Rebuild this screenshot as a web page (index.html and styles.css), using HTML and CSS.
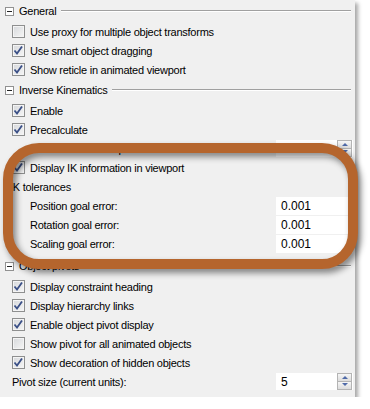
FILE: index.html
```html
<!DOCTYPE html>
<html>
<head>
<meta charset="utf-8">
<link rel="stylesheet" href="styles.css">
</head>
<body>
<div class="panel">

<div class="group">
  <div class="head"><span class="toggle"></span><span class="title">General</span><span class="rule"></span></div>
  <div class="row"><span class="cb"></span>Use proxy for multiple object transforms</div>
  <div class="row"><span class="cb on"><svg width="11" height="11" viewBox="0 0 11 11"><path d="M1.5 5.5 L4 8.5 L9 1.5" /></svg></span>Use smart object dragging</div>
  <div class="row"><span class="cb on"><svg width="11" height="11" viewBox="0 0 11 11"><path d="M1.5 5.5 L4 8.5 L9 1.5" /></svg></span>Show reticle in animated viewport</div>
</div>

<div class="group">
  <div class="head"><span class="toggle"></span><span class="title">Inverse Kinematics</span><span class="rule"></span></div>
  <div class="row"><span class="cb on"><svg width="11" height="11" viewBox="0 0 11 11"><path d="M1.5 5.5 L4 8.5 L9 1.5" /></svg></span>Enable</div>
  <div class="row"><span class="cb on"><svg width="11" height="11" viewBox="0 0 11 11"><path d="M1.5 5.5 L4 8.5 L9 1.5" /></svg></span>Precalculate</div>
  <div class="row indent">Precalculation samples:
    <span class="field">100<span class="spin"><span class="up"></span><span class="down"></span></span></span>
  </div>
  <div class="row"><span class="cb on"><svg width="11" height="11" viewBox="0 0 11 11"><path d="M1.5 5.5 L4 8.5 L9 1.5" /></svg></span>Display IK information in viewport</div>
  <div class="row label ik">IK tolerances</div>
  <div class="row indent">Position goal error:<span class="field stack">0.001</span></div>
  <div class="row indent">Rotation goal error:<span class="field stack">0.001</span></div>
  <div class="row indent">Scaling goal error:<span class="field stack">0.001</span></div>
</div>

<div class="group last">
  <div class="head"><span class="toggle"></span><span class="title">Object pivots</span><span class="rule"></span></div>
  <div class="row"><span class="cb on"><svg width="11" height="11" viewBox="0 0 11 11"><path d="M1.5 5.5 L4 8.5 L9 1.5" /></svg></span>Display constraint heading</div>
  <div class="row"><span class="cb on"><svg width="11" height="11" viewBox="0 0 11 11"><path d="M1.5 5.5 L4 8.5 L9 1.5" /></svg></span>Display hierarchy links</div>
  <div class="row"><span class="cb on"><svg width="11" height="11" viewBox="0 0 11 11"><path d="M1.5 5.5 L4 8.5 L9 1.5" /></svg></span>Enable object pivot display</div>
  <div class="row"><span class="cb"></span>Show pivot for all animated objects</div>
  <div class="row"><span class="cb on"><svg width="11" height="11" viewBox="0 0 11 11"><path d="M1.5 5.5 L4 8.5 L9 1.5" /></svg></span>Show decoration of hidden objects</div>
  <div class="row label">Pivot size (current units):
    <span class="field">5<span class="spin"><span class="up"></span><span class="down"></span></span></span>
  </div>
</div>

<div class="callout"></div>
</div>
</body>
</html>
```

FILE: styles.css
```css
body {
  margin: 0;
  background: #fff;
  font-family: "Liberation Sans", Arial, sans-serif;
  font-size: 11px;
  letter-spacing: -0.25px;
  color: #000;
}

.panel {
  position: relative;
  width: 355px;
  height: 397px;
  background: #f0f0f0;
  box-shadow: 3px 3px 4px rgba(0, 0, 0, 0.35);
}

.group.last {
  margin-top: 2px;
}

.head {
  display: flex;
  align-items: center;
  height: 22px;
  padding-left: 5px;
}

.toggle {
  position: relative;
  width: 9px;
  height: 9px;
  box-sizing: border-box;
  border: 1px solid #919191;
  background: #fff;
  margin-right: 5px;
}

.toggle::after {
  content: "";
  position: absolute;
  left: 1px;
  top: 3px;
  width: 5px;
  height: 1px;
  background: #222;
}

.rule {
  flex: 1;
  height: 1px;
  background: #a0a0a0;
  border-bottom: 1px solid #fff;
  margin: 0 4px 0 5px;
}

.row {
  display: flex;
  align-items: center;
  height: 19px;
  padding-left: 12px;
  white-space: nowrap;
}

.row.indent {
  padding-left: 30px;
}

.row.ik {
  padding-left: 10px;
}

.cb {
  display: flex;
  align-items: center;
  justify-content: center;
  width: 13px;
  height: 13px;
  box-sizing: border-box;
  border: 1px solid #8e8f8f;
  background: linear-gradient(135deg, #d6d8db, #f6f6f6);
  box-shadow: inset 0 0 0 1px #f4f4f4;
  margin-right: 5px;
}

.cb svg path {
  fill: none;
  stroke: #3a4f86;
  stroke-width: 1.8;
}

.field {
  position: relative;
  margin-left: auto;
  margin-right: 2px;
  width: 77px;
  height: 17px;
  box-sizing: border-box;
  padding-left: 5px;
  background: #fff;
  display: flex;
  align-items: center;
  font-size: 12px;
  letter-spacing: 0;
}

.field.stack {
  height: 18px;
}

.spin {
  position: absolute;
  right: 1px;
  top: 0;
  width: 15px;
  height: 17px;
  display: flex;
  flex-direction: column;
}

.spin span {
  flex: 1;
  position: relative;
  box-sizing: border-box;
  border: 1px solid #b4b4b4;
  background: linear-gradient(#f6f6f6, #dcdcdc);
}

.spin .down {
  border-top: none;
}

.spin span::after {
  content: "";
  position: absolute;
  left: 4px;
  top: 2px;
  border-left: 3px solid transparent;
  border-right: 3px solid transparent;
}

.spin .up::after {
  border-bottom: 3px solid #4f6aa8;
}

.spin .down::after {
  top: 1px;
  border-top: 3px solid #4f6aa8;
}

.callout {
  position: absolute;
  left: 3px;
  top: 143px;
  width: 355px;
  height: 126px;
  box-sizing: border-box;
  border: 10px solid #b5652d;
  border-radius: 36px;
  filter: drop-shadow(3px 4px 3px rgba(0, 0, 0, 0.45));
}
```
